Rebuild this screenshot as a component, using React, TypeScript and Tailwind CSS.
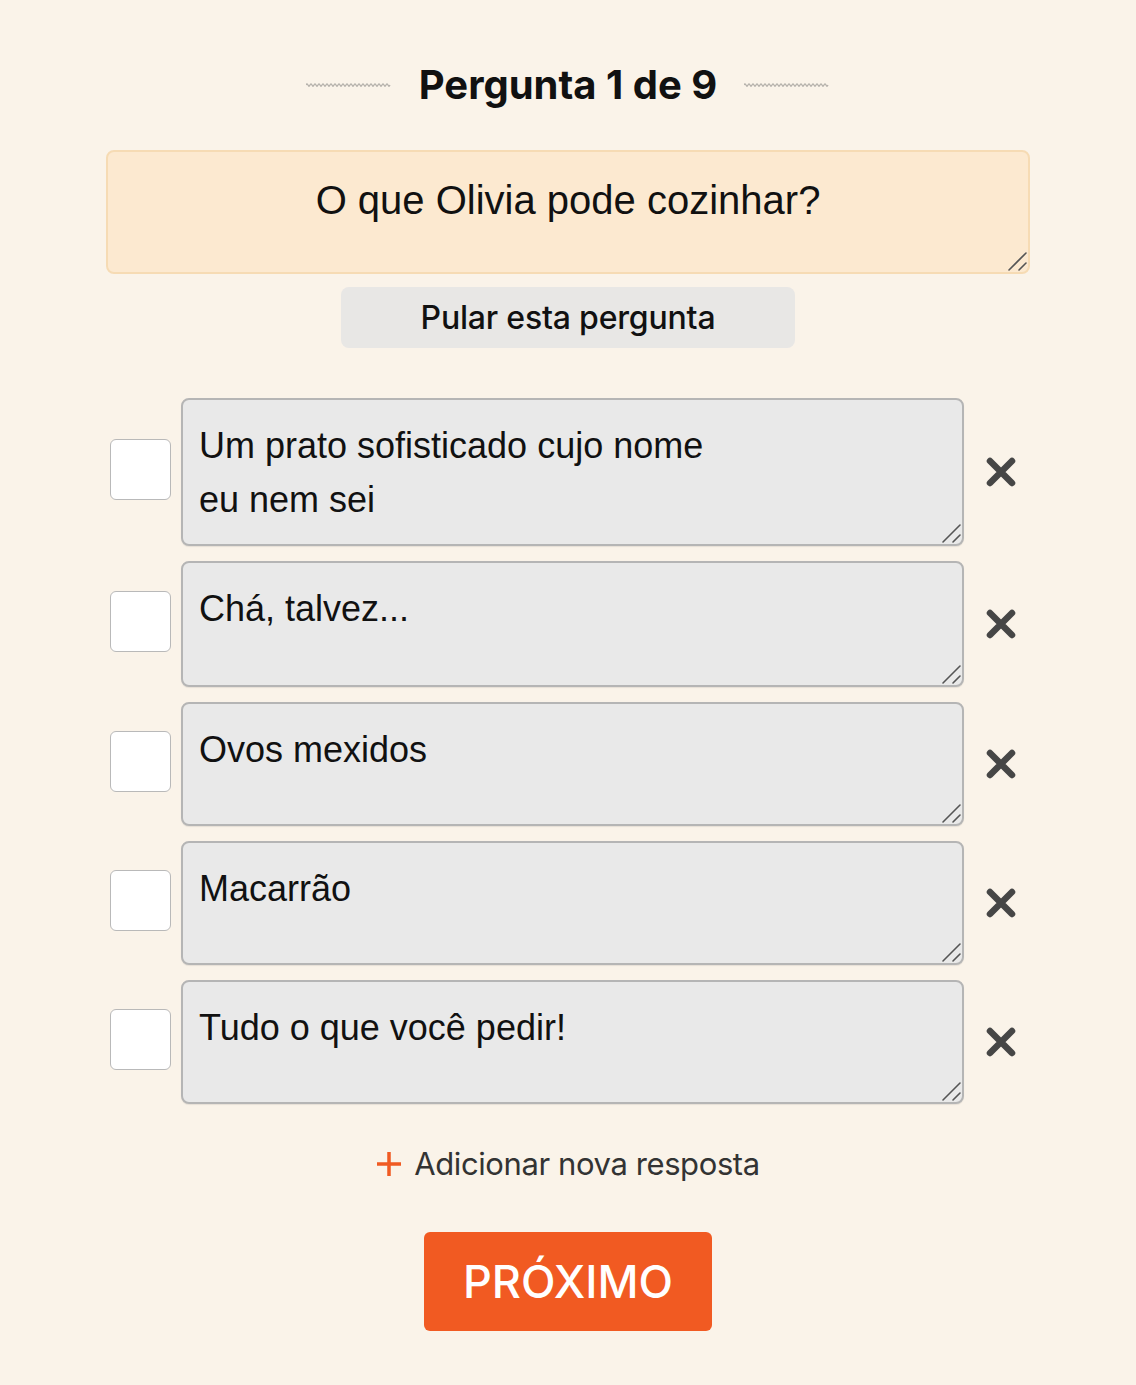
import React from "react";

const Wave = () => (
  <svg width="86" height="8" viewBox="0 0 86 8" className="block">
    <path
      d={"M0 4 " + Array.from({ length: 21 }).map((_, i) => `q1 -2.4 2 0 q1 2.4 2 0`).join(" ")}
      fill="none"
      stroke="#a9a6a1"
      strokeWidth="1.1"
    />
  </svg>
);

const XIcon = () => (
  <svg width="32" height="32" viewBox="0 0 32 32">
    <path d="M5 5 L27 27 M27 5 L5 27" stroke="#464646" strokeWidth="6.5" strokeLinecap="round" />
  </svg>
);

const Grip = () => (
  <svg width="24" height="24" viewBox="0 0 24 24" className="pointer-events-none absolute bottom-0 right-0">
    <path d="M3 20 L20 3 M13 20 L20 13" stroke="#555" strokeWidth="1.6" strokeLinecap="round" />
  </svg>
);

const answers = [
  { text: "Um prato sofisticado cujo nome\neu nem sei", h: "h-[148px]" },
  { text: "Chá, talvez...", h: "h-[126px]" },
  { text: "Ovos mexidos", h: "h-[124px]" },
  { text: "Macarrão", h: "h-[124px]" },
  { text: "Tudo o que você pedir!", h: "h-[124px]" },
];

export default function App() {
  return (
    <div className="min-h-[1385px] w-full bg-[#faf3e9] font-['Inter','Liberation_Sans',sans-serif] text-[#111]">
      <div className="flex flex-col px-[106px] pt-[58px]">
        <div className="flex items-center justify-center">
          <Wave />
          <h1 className="mx-[27px] text-[40px] font-bold leading-[54px] tracking-[0px] text-[#111]">
            Pergunta 1 de 9
          </h1>
          <Wave />
        </div>

        <div className="relative mt-[38px]">
          <textarea
            className="block h-[124px] w-full resize-none rounded-[8px] border-2 border-[#f6dbb4] bg-[#fce9d0] px-4 pt-[22px] text-center font-['Liberation_Sans','Arial',sans-serif] text-[40px] leading-[52px] text-[#111] outline-none"
            defaultValue="O que Olivia pode cozinhar?"
          />
          <Grip />
        </div>

        <div className="mt-[13px] flex justify-center">
          <button className="h-[61px] w-[454px] rounded-[8px] bg-[#e8e7e5] text-[32px] font-medium tracking-[-0.2px] text-[#111]">
            Pular esta pergunta
          </button>
        </div>

        <div className="mt-[50px] flex flex-col gap-[15px]">
          {answers.map((a, i) => (
            <div key={i} className="flex items-center">
              <div className="ml-[4px] mr-[10px] h-[61px] w-[61px] shrink-0 -translate-y-[3px] rounded-[6px] border-[1.5px] border-[#b9b9b9] bg-white" />
              <div className="relative flex-1">
                <textarea
                  className={`${a.h} block w-full resize-none rounded-[8px] border-2 border-[#b5b5b5] bg-[#e9e9e9] px-4 pt-[19px] font-['Liberation_Sans','Arial',sans-serif] text-[36px] leading-[54px] text-[#111] shadow-[0_1px_1px_rgba(0,0,0,0.08)] outline-none`}
                  defaultValue={a.text}
                />
                <Grip />
              </div>
              <div className="flex w-[66px] shrink-0 justify-end pr-[13px]">
                <XIcon />
              </div>
            </div>
          ))}
        </div>

        <div className="mt-[40px] flex items-center justify-center gap-[12px]">
          <svg width="26" height="26" viewBox="0 0 26 26">
            <path d="M13 1 V25 M1 13 H25" stroke="#f05a22" strokeWidth="3.5" />
          </svg>
          <span className="text-[31px] leading-[40px] tracking-[-0.4px] text-[#333]">Adicionar nova resposta</span>
        </div>

        <div className="mt-[48px] flex justify-center">
          <button className="h-[99px] w-[288px] rounded-[6px] bg-[#f15a22] text-[45px] font-medium tracking-[0px] text-white">
            PRÓXIMO
          </button>
        </div>
      </div>
    </div>
  );
}
